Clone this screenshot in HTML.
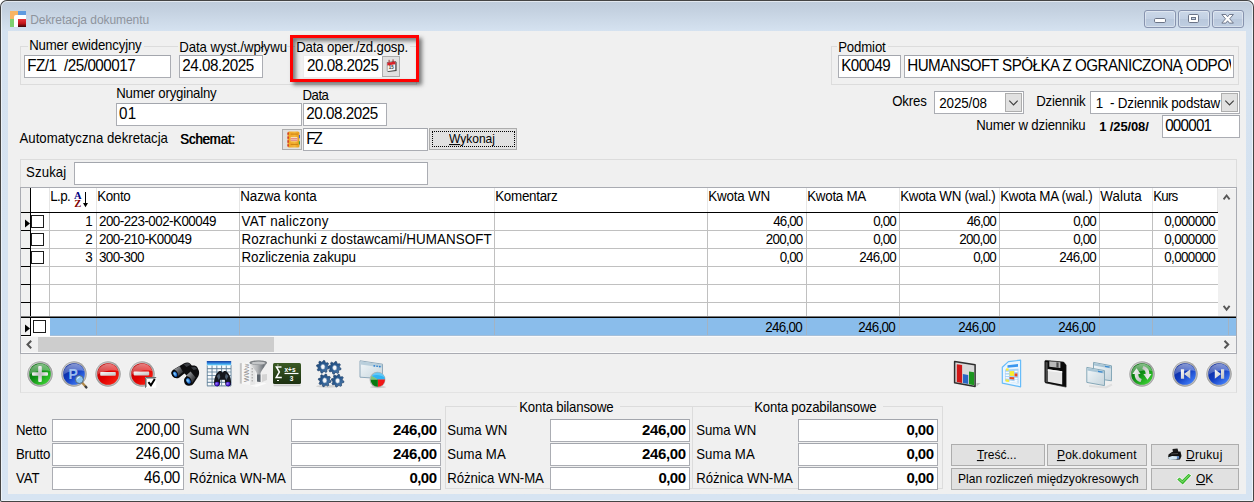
<!DOCTYPE html>
<html lang="pl"><head><meta charset="utf-8"><title>Dekretacja dokumentu</title>
<style>
*{box-sizing:border-box;margin:0;padding:0}
html,body{width:1254px;height:502px;overflow:hidden;background:#fff}
body{font-family:"Liberation Sans",Arial,sans-serif;font-size:13px;color:#000}
#win{position:absolute;left:0;top:0;width:1254px;height:502px;overflow:hidden;
 box-shadow:inset 0 0 0 1px #444;border-radius:7px 7px 2px 2px;
 background:linear-gradient(#becbda 0px,#c4d1e0 10px,#d5e2f0 31px,#d7e4f2 100%)}
#win>*{position:absolute}
.t{white-space:pre;line-height:normal}
.client{background:#f0f0f0}
.in{background:#fff;border:1px solid #abadb3;border-top-color:#a3a6ad}
.gb{border:1px solid #dcdcdc}
.lbl{background:#f0f0f0;padding:0 2px 0 1.5px;margin-left:-1.5px}
.btn{border:1px solid #adadad;background:#e1e1e1}
.ln{background:#c0c0c0}
.bk{background:#000}
u{text-decoration:underline;text-underline-offset:1px}

</style></head>
<body>
<div id="win">
<div style="left:1px;top:1px;width:1252px;height:500px;border:1px solid rgba(255,255,255,.55);border-radius:6px 6px 1px 1px"></div>
<svg style="left:10px;top:11px" width="16" height="16" viewBox="0 0 16 16">
<rect x="0" y="0" width="8" height="8" fill="#f9b463"/><rect x="8" y="0" width="8" height="4" fill="#5f9be0"/>
<rect x="0" y="8" width="4" height="8" fill="#7ed070"/>
<path d="M4 16V6a2 2 0 0 1 2-2h10v12z" fill="#fff"/>
<defs><linearGradient id="rg" x1="0" y1="0" x2="0" y2="1"><stop offset="0" stop-color="#e8343a"/><stop offset=".55" stop-color="#c4161c"/><stop offset="1" stop-color="#3a0508"/></linearGradient></defs>
<rect x="8" y="8" width="8" height="8" fill="url(#rg)"/></svg>
<span class="t " style="top:13px;font-size:12.01px;left:30.2px;letter-spacing:-0.056px;color:#8e949d;">Dekretacja dokumentu</span>
<div class="" style="left:1144px;top:10px;width:32px;height:18px;border:1px solid #8793ae;border-radius:3px;background:linear-gradient(#cbd8e8,#c2d0e3 48%,#b9c8dc 52%,#bfcee1);box-shadow:inset 0 0 0 1px rgba(255,255,255,.4)"></div>
<div class="" style="left:1178px;top:10px;width:32px;height:18px;border:1px solid #8793ae;border-radius:3px;background:linear-gradient(#cbd8e8,#c2d0e3 48%,#b9c8dc 52%,#bfcee1);box-shadow:inset 0 0 0 1px rgba(255,255,255,.4)"></div>
<div class="" style="left:1212px;top:10px;width:32px;height:18px;border:1px solid #8793ae;border-radius:3px;background:linear-gradient(#cbd8e8,#c2d0e3 48%,#b9c8dc 52%,#bfcee1);box-shadow:inset 0 0 0 1px rgba(255,255,255,.4)"></div>
<svg style="left:1144px;top:10px" width="100" height="18" viewBox="0 0 100 18"><rect x="10.5" y="8.5" width="11" height="4" rx="1.2" fill="#fff" stroke="#6b7487"/><rect x="44.5" y="4.5" width="10" height="8" rx="1.2" fill="#fff" stroke="#6b7487"/><rect x="47.5" y="7.5" width="4" height="2" fill="#c6d2e3" stroke="#6b7487"/><path d="M77.800 4.500h4.100l1.700 2.300 1.700-2.300h4.100l-3.700 4.300 3.700 4.300h-4.100l-1.700-2.300-1.700 2.300h-4.100l3.700-4.300z" fill="#fff" stroke="#656e82" stroke-width=".9" stroke-linejoin="round"/></svg>
<div class="client" style="left:8px;top:31px;width:1238px;height:463px;"></div>
<div class="gb" style="left:20px;top:46px;width:397px;height:39px;"></div>
<span class="t lbl" style="top:38px;font-size:13.2px;left:29.2px;letter-spacing:-0.161px;transform:scaleY(1.07);transform-origin:0 12px;">Numer ewidencyjny</span>
<div class="in" style="left:24px;top:55px;width:147px;height:23px;"></div>
<span class="t " style="top:57px;font-size:15.2px;left:27.2px;letter-spacing:-0.478px;transform:scaleY(1.035);transform-origin:0 14px;">FZ/1  /25/000017</span>
<div class="" style="left:178px;top:40px;width:109px;height:14px;background:#f0f0f0"></div>
<span class="t " style="top:40px;font-size:13.2px;left:179.2px;letter-spacing:-0.042px;transform:scaleY(1.07);transform-origin:0 12px;">Data wyst./wpływu</span>
<div class="in" style="left:179px;top:55px;width:84px;height:23px;"></div>
<span class="t " style="top:57px;font-size:15.2px;left:182.2px;letter-spacing:-0.442px;transform:scaleY(1.035);transform-origin:0 14px;">24.08.2025</span>
<span class="t lbl" style="top:40px;font-size:13.2px;left:296.2px;letter-spacing:-0.132px;transform:scaleY(1.07);transform-origin:0 12px;">Data oper./zd.gosp.</span>
<div class="" style="left:303px;top:55px;width:80px;height:23px;background:#fff;border:1px solid #ececec"></div>
<span class="t " style="top:57px;font-size:15.2px;left:307.1px;letter-spacing:-0.464px;transform:scaleY(1.035);transform-origin:0 14px;">20.08.2025</span>
<div class="btn" style="left:382px;top:56px;width:18px;height:21px;"></div>
<svg style="left:385.500px;top:59.300px" width="11.500" height="13.500" viewBox="0 0 13 15"><path d="M1 3.500l9.500-1.500 1.500 1.500v10l-9.500 1.200-1.500-1.400z" fill="#4a4a4a"/><path d="M1.500 4.200l9-1.400v9.500l-9 1.300z" fill="#f4f4f4"/><path d="M1.500 4.200l9-1.400v3l-9 1.400z" fill="#d8222a"/><path d="M3.500 .800v3M8 .300v3" stroke="#8a1a1a" stroke-width="1"/><text x="3.200" y="11.500" font-family="Liberation Sans,sans-serif" font-size="5" font-weight="bold" fill="#333">15</text></svg>
<div class="" style="left:290px;top:35px;width:129px;height:47px;border:3px solid #f00;box-shadow:3px 3px 4px rgba(0,0,0,.5),inset 3px 3px 4px rgba(0,0,0,.5)"></div>
<div class="gb" style="left:831px;top:46px;width:408px;height:39px;"></div>
<span class="t lbl" style="top:40px;font-size:13.2px;left:838.2px;letter-spacing:-0.136px;transform:scaleY(1.07);transform-origin:0 12px;">Podmiot</span>
<div class="in" style="left:838px;top:55px;width:63px;height:23px;"></div>
<span class="t " style="top:57px;font-size:15.2px;left:841.2px;letter-spacing:-0.562px;transform:scaleY(1.035);transform-origin:0 14px;">K00049</span>
<div class="in" style="left:904px;top:55px;width:330px;height:23px;overflow:hidden"></div>
<div style="left:907.2px;top:57px;width:323.79999999999995px;height:21px;overflow:hidden"><span class="t " style="position:absolute;top:0;font-size:15.2px;left:0;letter-spacing:-0.529px;transform:scaleY(1.035);transform-origin:0 14px;">HUMANSOFT SPÓŁKA Z OGRANICZONĄ ODPOW</span></div>
<span class="t " style="top:86px;font-size:13.2px;left:116.2px;letter-spacing:-0.189px;transform:scaleY(1.07);transform-origin:0 12px;">Numer oryginalny</span>
<div class="in" style="left:116px;top:103px;width:186px;height:23px;"></div>
<span class="t " style="top:105px;font-size:15.2px;left:119.0px;letter-spacing:0.378px;transform:scaleY(1.035);transform-origin:0 14px;">01</span>
<span class="t " style="top:88px;font-size:13.2px;left:302.4px;letter-spacing:-0.431px;transform:scaleY(1.07);transform-origin:0 12px;">Data</span>
<div class="in" style="left:303px;top:103px;width:84px;height:23px;"></div>
<span class="t " style="top:105px;font-size:15.2px;left:306.2px;letter-spacing:-0.442px;transform:scaleY(1.035);transform-origin:0 14px;">20.08.2025</span>
<span class="t " style="top:94px;font-size:13.2px;left:892.2px;letter-spacing:-0.151px;transform:scaleY(1.07);transform-origin:0 12px;">Okres</span>
<div class="in" style="left:934px;top:91px;width:90px;height:23px;"></div>
<span class="t " style="top:96px;font-size:13.4px;left:939.2px;letter-spacing:-0.09px;transform:scaleY(1.05);transform-origin:0 12px;">2025/08</span>
<div class="btn" style="left:1005px;top:93px;width:17px;height:19px;"></div>
<svg style="left:1005px;top:93px" width="17" height="19" viewBox="0 0 17 19"><path d="M4.3 7.600l4.200 4.200 4.200-4.200" fill="none" stroke="#404040" stroke-width="1.200"/></svg>
<span class="t " style="top:94px;font-size:13.2px;left:1036.2px;letter-spacing:-0.15px;transform:scaleY(1.07);transform-origin:0 12px;">Dziennik</span>
<div class="in" style="left:1090px;top:91px;width:150px;height:23px;"></div>
<span class="t " style="top:96px;font-size:13.4px;left:1095.7px;letter-spacing:-0.177px;transform:scaleY(1.05);transform-origin:0 12px;">1  - Dziennik podstaw</span>
<div class="btn" style="left:1221px;top:93px;width:17px;height:19px;"></div>
<svg style="left:1221px;top:93px" width="17" height="19" viewBox="0 0 17 19"><path d="M4.3 7.600l4.200 4.200 4.200-4.200" fill="none" stroke="#404040" stroke-width="1.200"/></svg>
<span class="t " style="top:118px;font-size:13.2px;left:976.2px;letter-spacing:-0.165px;transform:scaleY(1.07);transform-origin:0 12px;">Numer w dzienniku</span>
<span class="t " style="top:119px;font-size:13px;left:1099.2px;letter-spacing:-0.124px;font-weight:bold;transform:scaleY(1.05);transform-origin:0 12px;">1 /25/08/</span>
<div class="in" style="left:1162px;top:115px;width:78px;height:23px;"></div>
<span class="t " style="top:117px;font-size:15.2px;left:1165.2px;letter-spacing:-0.764px;transform:scaleY(1.035);transform-origin:0 14px;">000001</span>
<span class="t " style="top:131px;font-size:13.2px;left:19.5px;letter-spacing:0.017px;transform:scaleY(1.07);transform-origin:0 12px;">Automatyczna dekretacja</span>
<span class="t " style="top:132px;font-size:13.2px;left:180.0px;letter-spacing:-0.122px;text-shadow:.55px 0 0 #000;transform:scaleY(1.07);transform-origin:0 12px;">Schemat:</span>
<div class="btn" style="left:282px;top:129px;width:20px;height:21px;"></div>
<svg style="left:285.700px;top:131px" width="14.500" height="17.500" viewBox="0 0 14 17"><defs><linearGradient id="nb" x1="0" y1="0" x2="1" y2="0"><stop offset="0" stop-color="#f0a020"/><stop offset=".6" stop-color="#f4b83c"/><stop offset="1" stop-color="#e89a18"/></linearGradient></defs><rect x="1.500" y=".500" width="11.500" height="15.500" rx="1.500" fill="url(#nb)"/><path d="M2 1.500v13.500" stroke="#c8202c" stroke-width="1.200" stroke-dasharray="2.200 1.600"/><rect x="4.500" y="6" width="6.500" height="4" fill="#f6e8d8"/><path d="M4.500 7.500h6.500M4.500 9h6.500" stroke="#d85a5a" stroke-width=".8"/><path d="M4.500 3h7M4.500 13h7" stroke="#c87a10" stroke-width=".9"/><path d="M13 4v3" stroke="#4060d0" stroke-width="1"/><path d="M13 10v3" stroke="#30a040" stroke-width="1"/></svg>
<div class="in" style="left:303px;top:128px;width:125px;height:23px;"></div>
<span class="t " style="top:130px;font-size:15.2px;left:306.3px;letter-spacing:-2.174px;transform:scaleY(1.035);transform-origin:0 14px;">FZ</span>
<div class="btn" style="left:429px;top:128px;width:88px;height:22px;"></div>
<div class="" style="left:432px;top:131px;width:83px;height:16px;border:1px dotted #000"></div>
<span class="t " style="top:132px;font-size:12px;left:449.0px;letter-spacing:-0.002px;transform:scaleY(1.05);transform-origin:0 11px;"><u>W</u>ykonaj</span>
<div class="" style="left:20px;top:159px;width:1217px;height:234px;border:1px solid #dcdcdc;border-bottom-color:#e3e3e3"></div>
<span class="t " style="top:165px;font-size:13.2px;left:26.0px;letter-spacing:0.137px;transform:scaleY(1.07);transform-origin:0 12px;">Szukaj</span>
<div class="in" style="left:74px;top:162px;width:354px;height:23px;"></div>
<div class="" style="left:20px;top:187px;width:1217px;height:166px;background:#fff;border:1px solid #a9abb2;border-right:0;border-bottom:0"></div>
<div class="" style="left:21px;top:188px;width:9px;height:148px;background:#f0f0f0"></div>
<div class="bk" style="left:30px;top:188px;width:1px;height:148px;"></div>
<div class="" style="left:49px;top:188px;width:1px;height:24px;background:#e6e6e6"></div>
<div class="ln" style="left:49px;top:213px;width:1px;height:104px;"></div>
<div class="" style="left:96px;top:188px;width:1px;height:24px;background:#e6e6e6"></div>
<div class="ln" style="left:96px;top:213px;width:1px;height:104px;"></div>
<div class="" style="left:96px;top:318px;width:1px;height:18px;background:#a9b4bf"></div>
<div class="" style="left:239px;top:188px;width:1px;height:24px;background:#e6e6e6"></div>
<div class="ln" style="left:239px;top:213px;width:1px;height:104px;"></div>
<div class="" style="left:239px;top:318px;width:1px;height:18px;background:#a9b4bf"></div>
<div class="" style="left:494px;top:188px;width:1px;height:24px;background:#e6e6e6"></div>
<div class="ln" style="left:494px;top:213px;width:1px;height:104px;"></div>
<div class="" style="left:494px;top:318px;width:1px;height:18px;background:#a9b4bf"></div>
<div class="" style="left:707px;top:188px;width:1px;height:24px;background:#e6e6e6"></div>
<div class="ln" style="left:707px;top:213px;width:1px;height:104px;"></div>
<div class="" style="left:707px;top:318px;width:1px;height:18px;background:#a9b4bf"></div>
<div class="" style="left:806px;top:188px;width:1px;height:24px;background:#e6e6e6"></div>
<div class="ln" style="left:806px;top:213px;width:1px;height:104px;"></div>
<div class="" style="left:806px;top:318px;width:1px;height:18px;background:#a9b4bf"></div>
<div class="" style="left:899px;top:188px;width:1px;height:24px;background:#e6e6e6"></div>
<div class="ln" style="left:899px;top:213px;width:1px;height:104px;"></div>
<div class="" style="left:899px;top:318px;width:1px;height:18px;background:#a9b4bf"></div>
<div class="" style="left:999px;top:188px;width:1px;height:24px;background:#e6e6e6"></div>
<div class="ln" style="left:999px;top:213px;width:1px;height:104px;"></div>
<div class="" style="left:999px;top:318px;width:1px;height:18px;background:#a9b4bf"></div>
<div class="" style="left:1099px;top:188px;width:1px;height:24px;background:#e6e6e6"></div>
<div class="ln" style="left:1099px;top:213px;width:1px;height:104px;"></div>
<div class="" style="left:1099px;top:318px;width:1px;height:18px;background:#a9b4bf"></div>
<div class="" style="left:1152px;top:188px;width:1px;height:24px;background:#e6e6e6"></div>
<div class="ln" style="left:1152px;top:213px;width:1px;height:104px;"></div>
<div class="" style="left:1152px;top:318px;width:1px;height:18px;background:#a9b4bf"></div>
<div class="bk" style="left:21px;top:212px;width:1197px;height:1px;"></div>
<div class="ln" style="left:31px;top:230px;width:1187px;height:1px;"></div>
<div class="bk" style="left:21px;top:230px;width:10px;height:1px;"></div>
<div class="ln" style="left:31px;top:248px;width:1187px;height:1px;"></div>
<div class="bk" style="left:21px;top:248px;width:10px;height:1px;"></div>
<div class="ln" style="left:31px;top:266px;width:1187px;height:1px;"></div>
<div class="bk" style="left:21px;top:266px;width:10px;height:1px;"></div>
<div class="ln" style="left:31px;top:284px;width:1187px;height:1px;"></div>
<div class="bk" style="left:21px;top:284px;width:10px;height:1px;"></div>
<div class="ln" style="left:31px;top:302px;width:1187px;height:1px;"></div>
<div class="bk" style="left:21px;top:302px;width:10px;height:1px;"></div>
<div class="" style="left:1217px;top:188px;width:1px;height:24px;background:#e6e6e6"></div>
<div class="" style="left:1218px;top:188px;width:18px;height:129px;background:#f0f0f0;border-top:1px solid #fbfbfb"></div>
<svg style="left:1218px;top:188px" width="18" height="129" viewBox="0 0 18 129"><path d="M5.600 11.300L8.600 7.500L11.600 11.300M5.600 117.900L8.600 121.700L11.600 117.900" fill="none" stroke="#585858" stroke-width="1.900"/></svg>
<div class="" style="left:21px;top:316px;width:1215px;height:1px;background:#7a7a7a"></div>
<div class="bk" style="left:21px;top:317px;width:1215px;height:1px;"></div>
<div class="" style="left:31px;top:318px;width:19px;height:18px;background:#fff"></div>
<div class="" style="left:50px;top:318px;width:1186px;height:18px;background:#8abdeb"></div>
<div class="" style="left:96px;top:318px;width:1px;height:18px;background:#a3b3c3"></div>
<div class="" style="left:239px;top:318px;width:1px;height:18px;background:#a3b3c3"></div>
<div class="" style="left:494px;top:318px;width:1px;height:18px;background:#a3b3c3"></div>
<div class="" style="left:707px;top:318px;width:1px;height:18px;background:#a3b3c3"></div>
<div class="" style="left:806px;top:318px;width:1px;height:18px;background:#a3b3c3"></div>
<div class="" style="left:899px;top:318px;width:1px;height:18px;background:#a3b3c3"></div>
<div class="" style="left:999px;top:318px;width:1px;height:18px;background:#a3b3c3"></div>
<div class="" style="left:1099px;top:318px;width:1px;height:18px;background:#a3b3c3"></div>
<div class="" style="left:1152px;top:318px;width:1px;height:18px;background:#a3b3c3"></div>
<div class="" style="left:1228px;top:318px;width:1px;height:18px;background:#a3b3c3"></div>
<div class="bk" style="left:21px;top:335px;width:10px;height:1px;"></div>
<div class="" style="left:50px;top:335px;width:1186px;height:1px;background:#a4bfda"></div>
<div class="" style="left:21px;top:336px;width:1215px;height:17px;background:#f0f0f0;border-top:1px solid #fafafa;border-bottom:1px solid #fafafa"></div>
<div class="" style="left:38px;top:337px;width:236px;height:15px;background:#cdcdcd"></div>
<svg style="left:21px;top:336px" width="1215" height="17" viewBox="0 0 1215 17"><path d="M10.200 4.800l-3.700 3.700 3.700 3.700M1203.500 4.800l3.700 3.700-3.700 3.700" fill="none" stroke="#555" stroke-width="2"/></svg>
<div class="" style="left:20px;top:353px;width:1217px;height:1px;background:#a9abb2"></div>
<div class="" style="left:1236px;top:187px;width:1px;height:167px;background:#a9abb2"></div>
<div class="" style="left:31px;top:215px;width:13px;height:13px;background:#fff;border:1px solid #1c1c1c"></div>
<div class="" style="left:31px;top:233px;width:13px;height:13px;background:#fff;border:1px solid #1c1c1c"></div>
<div class="" style="left:31px;top:251px;width:13px;height:13px;background:#fff;border:1px solid #1c1c1c"></div>
<div class="" style="left:33px;top:320px;width:13px;height:13px;background:#fff;border:1px solid #1c1c1c"></div>
<svg style="left:24px;top:219px" width="6" height="9" viewBox="0 0 6 9"><path d="M1 0.5l5 4-5 4z" fill="#000"/></svg>
<svg style="left:24px;top:324px" width="6" height="9" viewBox="0 0 6 9"><path d="M1 0.5l5 4-5 4z" fill="#000"/></svg>
<span class="t " style="top:189px;font-size:13.4px;left:50.2px;letter-spacing:-0.584px;transform:scaleY(1.05);transform-origin:0 12px;">L.p.</span>
<span class="t " style="top:189px;font-size:13.4px;left:97.2px;letter-spacing:-0.354px;transform:scaleY(1.05);transform-origin:0 12px;">Konto</span>
<span class="t " style="top:189px;font-size:13.4px;left:240.2px;letter-spacing:-0.088px;transform:scaleY(1.05);transform-origin:0 12px;">Nazwa konta</span>
<span class="t " style="top:189px;font-size:13.4px;left:495.2px;letter-spacing:-0.274px;transform:scaleY(1.05);transform-origin:0 12px;">Komentarz</span>
<span class="t " style="top:189px;font-size:13.4px;left:708.2px;letter-spacing:-0.17px;transform:scaleY(1.05);transform-origin:0 12px;">Kwota WN</span>
<span class="t " style="top:189px;font-size:13.4px;left:807.2px;letter-spacing:-0.281px;transform:scaleY(1.05);transform-origin:0 12px;">Kwota MA</span>
<span class="t " style="top:189px;font-size:13.4px;left:900.2px;letter-spacing:-0.297px;transform:scaleY(1.05);transform-origin:0 12px;">Kwota WN (wal.)</span>
<span class="t " style="top:189px;font-size:13.4px;left:1000.2px;letter-spacing:-0.3px;transform:scaleY(1.05);transform-origin:0 12px;">Kwota MA (wal.)</span>
<span class="t " style="top:189px;font-size:13.4px;left:1100.2px;letter-spacing:0.076px;transform:scaleY(1.05);transform-origin:0 12px;">Waluta</span>
<span class="t " style="top:189px;font-size:13.4px;left:1153.2px;letter-spacing:-0.817px;transform:scaleY(1.05);transform-origin:0 12px;">Kurs</span>
<svg style="left:73px;top:190px" width="20" height="20" viewBox="0 0 20 20"><text x="1" y="9" font-family="Liberation Serif,serif" font-size="10.500" font-weight="bold" fill="#000080">A</text><text x="1.2" y="17.200" font-family="Liberation Serif,serif" font-size="10.500" font-weight="bold" fill="#800000">Z</text><path d="M12 2h1v12h-1z M10 13h5l-2.5 4.200z" fill="#000"/></svg>
<span class="t " style="top:214px;font-size:13.4px;right:1161.20px;transform:scaleY(1.05);transform-origin:0 12px;">1</span>
<span class="t " style="top:214px;font-size:13.4px;left:99.0px;letter-spacing:-0.533px;transform:scaleY(1.05);transform-origin:0 12px;">200-223-002-K00049</span>
<span class="t " style="top:214px;font-size:13.4px;left:241.5px;letter-spacing:0.29px;transform:scaleY(1.05);transform-origin:0 12px;">VAT naliczony</span>
<span class="t " style="top:214px;font-size:13.4px;right:451.55px;letter-spacing:-0.857px;transform:scaleY(1.05);transform-origin:0 12px;">46,00</span>
<span class="t " style="top:214px;font-size:13.4px;right:358.02px;letter-spacing:-0.825px;transform:scaleY(1.05);transform-origin:0 12px;">0,00</span>
<span class="t " style="top:214px;font-size:13.4px;right:258.05px;letter-spacing:-0.857px;transform:scaleY(1.05);transform-origin:0 12px;">46,00</span>
<span class="t " style="top:214px;font-size:13.4px;right:158.02px;letter-spacing:-0.825px;transform:scaleY(1.05);transform-origin:0 12px;">0,00</span>
<span class="t " style="top:214px;font-size:13.4px;right:38.81px;letter-spacing:-0.613px;transform:scaleY(1.05);transform-origin:0 12px;">0,000000</span>
<span class="t " style="top:232px;font-size:13.4px;right:1161.20px;transform:scaleY(1.05);transform-origin:0 12px;">2</span>
<span class="t " style="top:232px;font-size:13.4px;left:99.0px;letter-spacing:-0.534px;transform:scaleY(1.05);transform-origin:0 12px;">200-210-K00049</span>
<span class="t " style="top:232px;font-size:13.4px;left:241.5px;letter-spacing:0.074px;transform:scaleY(1.05);transform-origin:0 12px;">Rozrachunki z dostawcami/HUMANSOFT</span>
<span class="t " style="top:232px;font-size:13.4px;right:451.38px;letter-spacing:-0.678px;transform:scaleY(1.05);transform-origin:0 12px;">200,00</span>
<span class="t " style="top:232px;font-size:13.4px;right:358.02px;letter-spacing:-0.825px;transform:scaleY(1.05);transform-origin:0 12px;">0,00</span>
<span class="t " style="top:232px;font-size:13.4px;right:257.88px;letter-spacing:-0.678px;transform:scaleY(1.05);transform-origin:0 12px;">200,00</span>
<span class="t " style="top:232px;font-size:13.4px;right:158.02px;letter-spacing:-0.825px;transform:scaleY(1.05);transform-origin:0 12px;">0,00</span>
<span class="t " style="top:232px;font-size:13.4px;right:38.81px;letter-spacing:-0.613px;transform:scaleY(1.05);transform-origin:0 12px;">0,000000</span>
<span class="t " style="top:250px;font-size:13.4px;right:1161.20px;transform:scaleY(1.05);transform-origin:0 12px;">3</span>
<span class="t " style="top:250px;font-size:13.4px;left:99.0px;letter-spacing:-0.596px;transform:scaleY(1.05);transform-origin:0 12px;">300-300</span>
<span class="t " style="top:250px;font-size:13.4px;left:241.5px;letter-spacing:-0.05px;transform:scaleY(1.05);transform-origin:0 12px;">Rozliczenia zakupu</span>
<span class="t " style="top:250px;font-size:13.4px;right:451.52px;letter-spacing:-0.825px;transform:scaleY(1.05);transform-origin:0 12px;">0,00</span>
<span class="t " style="top:250px;font-size:13.4px;right:357.88px;letter-spacing:-0.678px;transform:scaleY(1.05);transform-origin:0 12px;">246,00</span>
<span class="t " style="top:250px;font-size:13.4px;right:258.02px;letter-spacing:-0.825px;transform:scaleY(1.05);transform-origin:0 12px;">0,00</span>
<span class="t " style="top:250px;font-size:13.4px;right:157.88px;letter-spacing:-0.678px;transform:scaleY(1.05);transform-origin:0 12px;">246,00</span>
<span class="t " style="top:250px;font-size:13.4px;right:38.81px;letter-spacing:-0.613px;transform:scaleY(1.05);transform-origin:0 12px;">0,000000</span>
<span class="t " style="top:320px;font-size:13.4px;right:451.88px;letter-spacing:-0.678px;transform:scaleY(1.05);transform-origin:0 12px;">246,00</span>
<span class="t " style="top:320px;font-size:13.4px;right:358.88px;letter-spacing:-0.678px;transform:scaleY(1.05);transform-origin:0 12px;">246,00</span>
<span class="t " style="top:320px;font-size:13.4px;right:258.88px;letter-spacing:-0.678px;transform:scaleY(1.05);transform-origin:0 12px;">246,00</span>
<span class="t " style="top:320px;font-size:13.4px;right:158.88px;letter-spacing:-0.678px;transform:scaleY(1.05);transform-origin:0 12px;">246,00</span>
<span class="t " style="top:423px;font-size:13.2px;left:15.9px;letter-spacing:-0.162px;transform:scaleY(1.07);transform-origin:0 12px;">Netto</span>
<div class="in" style="left:52px;top:419px;width:132px;height:23px;"></div>
<span class="t " style="top:421px;font-size:15.2px;right:1074.28px;letter-spacing:-0.379px;transform:scaleY(1.035);transform-origin:0 14px;">200,00</span>
<span class="t " style="top:447px;font-size:13.2px;left:15.9px;letter-spacing:-0.124px;transform:scaleY(1.07);transform-origin:0 12px;">Brutto</span>
<div class="in" style="left:52px;top:443px;width:132px;height:23px;"></div>
<span class="t " style="top:445px;font-size:15.2px;right:1074.28px;letter-spacing:-0.379px;transform:scaleY(1.035);transform-origin:0 14px;">246,00</span>
<span class="t " style="top:471px;font-size:13.2px;left:15.9px;letter-spacing:-0.054px;transform:scaleY(1.07);transform-origin:0 12px;">VAT</span>
<div class="in" style="left:52px;top:467px;width:132px;height:23px;"></div>
<span class="t " style="top:469px;font-size:15.2px;right:1074.38px;letter-spacing:-0.483px;transform:scaleY(1.035);transform-origin:0 14px;">46,00</span>
<div class="gb" style="left:445px;top:406px;width:248px;height:83px;"></div>
<div class="gb" style="left:692px;top:406px;width:251px;height:83px;"></div>
<div class="" style="left:517px;top:400px;width:103px;height:14px;background:#f0f0f0"></div>
<span class="t " style="top:400px;font-size:13.2px;left:519.2px;letter-spacing:-0.162px;transform:scaleY(1.07);transform-origin:0 12px;">Konta bilansowe</span>
<div class="" style="left:752px;top:400px;width:131px;height:14px;background:#f0f0f0"></div>
<span class="t " style="top:400px;font-size:13.2px;left:754.2px;letter-spacing:-0.161px;transform:scaleY(1.07);transform-origin:0 12px;">Konta pozabilansowe</span>
<span class="t " style="top:423px;font-size:13.2px;left:189.2px;letter-spacing:-0.007px;transform:scaleY(1.07);transform-origin:0 12px;">Suma WN</span>
<div class="in" style="left:291px;top:419px;width:150px;height:23px;"></div>
<span class="t " style="top:421px;font-size:15px;right:817.38px;letter-spacing:-0.377px;font-weight:bold;transform:scaleY(1.02);transform-origin:0 14px;">246,00</span>
<span class="t " style="top:447px;font-size:13.2px;left:189.2px;letter-spacing:0.109px;transform:scaleY(1.07);transform-origin:0 12px;">Suma MA</span>
<div class="in" style="left:291px;top:443px;width:150px;height:23px;"></div>
<span class="t " style="top:445px;font-size:15px;right:817.38px;letter-spacing:-0.377px;font-weight:bold;transform:scaleY(1.02);transform-origin:0 14px;">246,00</span>
<span class="t " style="top:471px;font-size:13.2px;left:189.2px;letter-spacing:-0.062px;transform:scaleY(1.07);transform-origin:0 12px;">Różnica WN-MA</span>
<div class="in" style="left:291px;top:467px;width:150px;height:23px;"></div>
<span class="t " style="top:469px;font-size:15px;right:817.53px;letter-spacing:-0.53px;font-weight:bold;transform:scaleY(1.02);transform-origin:0 14px;">0,00</span>
<span class="t " style="top:423px;font-size:13.2px;left:447.2px;letter-spacing:-0.007px;transform:scaleY(1.07);transform-origin:0 12px;">Suma WN</span>
<div class="in" style="left:550px;top:419px;width:140px;height:23px;"></div>
<span class="t " style="top:421px;font-size:15px;right:568.38px;letter-spacing:-0.377px;font-weight:bold;transform:scaleY(1.02);transform-origin:0 14px;">246,00</span>
<span class="t " style="top:447px;font-size:13.2px;left:447.2px;letter-spacing:0.109px;transform:scaleY(1.07);transform-origin:0 12px;">Suma MA</span>
<div class="in" style="left:550px;top:443px;width:140px;height:23px;"></div>
<span class="t " style="top:445px;font-size:15px;right:568.38px;letter-spacing:-0.377px;font-weight:bold;transform:scaleY(1.02);transform-origin:0 14px;">246,00</span>
<span class="t " style="top:471px;font-size:13.2px;left:447.2px;letter-spacing:-0.062px;transform:scaleY(1.07);transform-origin:0 12px;">Różnica WN-MA</span>
<div class="in" style="left:550px;top:467px;width:140px;height:23px;"></div>
<span class="t " style="top:469px;font-size:15px;right:568.53px;letter-spacing:-0.53px;font-weight:bold;transform:scaleY(1.02);transform-origin:0 14px;">0,00</span>
<span class="t " style="top:423px;font-size:13.2px;left:696.2px;letter-spacing:-0.007px;transform:scaleY(1.07);transform-origin:0 12px;">Suma WN</span>
<div class="in" style="left:798px;top:419px;width:140px;height:23px;"></div>
<span class="t " style="top:421px;font-size:15px;right:320.53px;letter-spacing:-0.53px;font-weight:bold;transform:scaleY(1.02);transform-origin:0 14px;">0,00</span>
<span class="t " style="top:447px;font-size:13.2px;left:696.2px;letter-spacing:0.109px;transform:scaleY(1.07);transform-origin:0 12px;">Suma MA</span>
<div class="in" style="left:798px;top:443px;width:140px;height:23px;"></div>
<span class="t " style="top:445px;font-size:15px;right:320.53px;letter-spacing:-0.53px;font-weight:bold;transform:scaleY(1.02);transform-origin:0 14px;">0,00</span>
<span class="t " style="top:471px;font-size:13.2px;left:696.2px;letter-spacing:-0.062px;transform:scaleY(1.07);transform-origin:0 12px;">Różnica WN-MA</span>
<div class="in" style="left:798px;top:467px;width:140px;height:23px;"></div>
<span class="t " style="top:469px;font-size:15px;right:320.53px;letter-spacing:-0.53px;font-weight:bold;transform:scaleY(1.02);transform-origin:0 14px;">0,00</span>
<div class="btn" style="left:951px;top:444px;width:94px;height:22px;"></div>
<span class="t " style="top:448px;font-size:12px;left:976.9px;letter-spacing:0.007px;transform:scaleY(1.05);transform-origin:0 11px;"><u>T</u>reść...</span>
<div class="btn" style="left:1047px;top:444px;width:100px;height:22px;"></div>
<span class="t " style="top:448px;font-size:12px;left:1056.9px;letter-spacing:0.262px;transform:scaleY(1.05);transform-origin:0 11px;"><u>P</u>ok.dokument</span>
<div class="btn" style="left:1151px;top:444px;width:88px;height:22px;"></div>
<span class="t " style="top:448px;font-size:12px;left:1185.9px;letter-spacing:0.344px;transform:scaleY(1.05);transform-origin:0 11px;"><u>D</u>rukuj</span>
<div class="btn" style="left:951px;top:468px;width:196px;height:22px;"></div>
<span class="t " style="top:472px;font-size:12px;left:958.0px;letter-spacing:0.04px;transform:scaleY(1.05);transform-origin:0 11px;">Plan rozliczeń międzyokresowych</span>
<div class="btn" style="left:1151px;top:468px;width:88px;height:22px;"></div>
<span class="t " style="top:472px;font-size:12px;left:1196.0px;letter-spacing:-0.04px;transform:scaleY(1.05);transform-origin:0 11px;"><u>O</u>K</span>
<svg style="left:1167px;top:448px" width="15" height="13" viewBox="0 0 15 13"><path d="M5.500 1l5-.6 1 3.600-5.500 1z" fill="#1a1a1a"/><path d="M1.500 6.500l3.500-2.500 8.500-.5 1 4.500-1.500 3.500-9 .500-3-2z" fill="#111"/><path d="M.8 9.500l4.200-1.500 6 .2-1.500 3.300-6.500 .5z" fill="#d4e8f4"/><path d="M9.800 8.200l2.200-.2.300 2.500-2.200 .5z" fill="#5a86c0"/><path d="M4 6l7-.5" stroke="#555" stroke-width=".8"/></svg>
<svg style="left:1176px;top:473px" width="16" height="12" viewBox="0 0 16 12"><path d="M1.200 6.400l2.300-2 2.700 2.700 6.300-6.300 2.600 1.700-8.400 8.900z" fill="#fff" fill-opacity=".9" stroke="#fff" stroke-width="1.200" stroke-linejoin="round"/><path d="M1.200 6.400l2.300-2 2.700 2.700 6.300-6.300 2.600 1.700-8.400 8.900z" fill="#39b52c"/><path d="M2.500 6.300l1.100-.9 2.700 2.800 6.400-6.400 1 .6-7.300 7.400z" fill="#7fe070" fill-opacity=".8"/></svg>
<svg width="0" height="0" style="left:0;top:0"><defs>
<linearGradient id="ring" x1="0" y1="0" x2="1" y2="1"><stop offset="0" stop-color="#e4e4e4"/><stop offset=".5" stop-color="#a9a9a9"/><stop offset="1" stop-color="#c9c9c9"/></linearGradient>
<linearGradient id="gG" x1=".1" y1="0" x2=".9" y2="1"><stop offset="0" stop-color="#0a6a0e"/><stop offset=".45" stop-color="#0b8a12"/><stop offset=".8" stop-color="#2fc02a"/><stop offset="1" stop-color="#48d040"/></linearGradient>
<linearGradient id="gR" x1="0" y1="0" x2="1" y2="1"><stop offset="0" stop-color="#b30000"/><stop offset=".5" stop-color="#e00000"/><stop offset="1" stop-color="#ff2a1a"/></linearGradient>
<linearGradient id="gB" x1=".1" y1="0" x2=".9" y2="1"><stop offset="0" stop-color="#0a2490"/><stop offset=".5" stop-color="#123cc0"/><stop offset=".85" stop-color="#3a74f0"/><stop offset="1" stop-color="#5a95ff"/></linearGradient>
<linearGradient id="gl" x1="0" y1="0" x2="0" y2="1"><stop offset="0" stop-color="#fff" stop-opacity=".5"/><stop offset="1" stop-color="#fff" stop-opacity=".18"/></linearGradient>
<radialGradient id="wh2" cx=".5" cy=".5" r=".6"><stop offset="0" stop-color="#b8b8b8"/><stop offset=".6" stop-color="#e4e4e4"/><stop offset="1" stop-color="#f4f4f4"/></radialGradient>
<linearGradient id="wh" x1="0" y1="0" x2="1" y2="1"><stop offset="0" stop-color="#fbfbfb"/><stop offset="1" stop-color="#bdbdbd"/></linearGradient>
<linearGradient id="tb" x1="0" y1="0" x2="0" y2="1"><stop offset="0" stop-color="#16409c"/><stop offset=".4" stop-color="#2a78d8"/><stop offset=".8" stop-color="#58c0f4"/><stop offset="1" stop-color="#b8ecfa"/></linearGradient>
<linearGradient id="gr" x1="0" y1="0" x2="1" y2="1"><stop offset="0" stop-color="#1f4a7c"/><stop offset=".5" stop-color="#2a5a90"/><stop offset="1" stop-color="#5a86b4"/></linearGradient>
<linearGradient id="bg1" x1="0" y1="0" x2="1" y2="1"><stop offset="0" stop-color="#b4b6b8"/><stop offset=".5" stop-color="#5c5e62"/><stop offset="1" stop-color="#141416"/></linearGradient>
<linearGradient id="sv" x1="0" y1="0" x2="1" y2="0"><stop offset="0" stop-color="#e8e8e8"/><stop offset=".45" stop-color="#b4b6b8"/><stop offset=".8" stop-color="#70767c"/><stop offset="1" stop-color="#a0a4a8"/></linearGradient>
<linearGradient id="bd" x1="0" y1="0" x2="0" y2="1"><stop offset="0" stop-color="#3a5a24"/><stop offset="1" stop-color="#1c3010"/></linearGradient>
<linearGradient id="wn" x1="0" y1="0" x2="1" y2="1"><stop offset="0" stop-color="#f4f8fa"/><stop offset="1" stop-color="#c4d4dc"/></linearGradient>
<radialGradient id="ln" cx=".4" cy=".4" r=".7"><stop offset="0" stop-color="#9fe0ff"/><stop offset=".6" stop-color="#1d6fd0"/><stop offset="1" stop-color="#0a2060"/></radialGradient>
<radialGradient id="lp" cx=".4" cy=".4" r=".7"><stop offset="0" stop-color="#a080ff"/><stop offset=".6" stop-color="#3a10c0"/><stop offset="1" stop-color="#100040"/></radialGradient>
</defs></svg>
<svg style="left:26px;top:360px;overflow:visible" width="28" height="28" viewBox="0 0 28 28"><circle cx="14" cy="14" r="13.4" fill="#fff" fill-opacity=".5"/><circle cx="14" cy="14" r="12.8" fill="url(#ring)"/><circle cx="14" cy="14" r="12.3" fill="none" stroke="#8f8f8f" stroke-opacity=".55" stroke-width=".9"/><circle cx="14" cy="14" r="10.800" fill="url(#gG)"/><path d="M3.300 15.200C7 11.200 17 9.600 24.300 11A10.800 10.800 0 0 0 3.300 15.200z" fill="url(#gl)"/><path d="M12.200 7a1 1 0 0 1 1-1h1.600a1 1 0 0 1 1 1v5.200H21a1 1 0 0 1 1 1v1.600a1 1 0 0 1-1 1h-5.200V21a1 1 0 0 1-1 1h-1.600a1 1 0 0 1-1-1v-5.200H7a1 1 0 0 1-1-1v-1.600a1 1 0 0 1 1-1h5.200z" fill="url(#wh2)"/></svg>
<svg style="left:60px;top:360px;overflow:visible" width="28" height="28" viewBox="0 0 28 28"><circle cx="14" cy="14" r="13.4" fill="#fff" fill-opacity=".5"/><circle cx="14" cy="14" r="12.8" fill="url(#ring)"/><circle cx="14" cy="14" r="12.3" fill="none" stroke="#8f8f8f" stroke-opacity=".55" stroke-width=".9"/><circle cx="14" cy="14" r="10.800" fill="url(#gB)"/><path d="M3.300 15.200C7 11.200 17 9.600 24.300 11A10.800 10.800 0 0 0 3.300 15.200z" fill="url(#gl)"/><text x="8.600" y="18.800" font-family="Liberation Sans,sans-serif" font-weight="bold" font-size="14" fill="#a9c9f2" fill-opacity=".92">P</text><path d="M21.600 22l4.600 5.200" stroke="#b08848" stroke-width="2.300" stroke-linecap="round"/><path d="M25.600 26.600l.8.900" stroke="#3a4048" stroke-width="2.300" stroke-linecap="round"/><circle cx="19.400" cy="19.500" r="4" fill="#8cc4f0" stroke="#55616d" stroke-width=".9"/><path d="M16.800 19.800a2.700 2.700 0 0 1 3.800-2.900c-1.400 0-2.800 1.400-3.800 2.900z" fill="#fff" fill-opacity=".85"/></svg>
<svg style="left:94px;top:360px;overflow:visible" width="28" height="28" viewBox="0 0 28 28"><circle cx="14" cy="14" r="13.4" fill="#fff" fill-opacity=".5"/><circle cx="14" cy="14" r="12.8" fill="url(#ring)"/><circle cx="14" cy="14" r="12.3" fill="none" stroke="#8f8f8f" stroke-opacity=".55" stroke-width=".9"/><circle cx="14" cy="14" r="10.800" fill="url(#gR)"/><path d="M3.300 15.200C7 11.200 17 9.600 24.300 11A10.800 10.800 0 0 0 3.300 15.200z" fill="url(#gl)"/><rect x="6.200" y="12" width="15.600" height="3.800" rx=".8" fill="url(#wh)"/></svg>
<svg style="left:128px;top:360px;overflow:visible" width="28" height="28" viewBox="0 0 28 28"><circle cx="14" cy="14" r="13.4" fill="#fff" fill-opacity=".5"/><circle cx="14" cy="14" r="12.8" fill="url(#ring)"/><circle cx="14" cy="14" r="12.3" fill="none" stroke="#8f8f8f" stroke-opacity=".55" stroke-width=".9"/><circle cx="14" cy="14" r="10.800" fill="url(#gR)"/><path d="M3.300 15.200C7 11.200 17 9.600 24.300 11A10.800 10.800 0 0 0 3.300 15.200z" fill="url(#gl)"/><rect x="5.600" y="11.600" width="15.600" height="3.800" rx=".8" fill="url(#wh)"/><rect x="17" y="17" width="11.200" height="10.800" fill="#fff"/><path d="M17.500 27.800v-10.300h10.700" fill="none" stroke="#6a6a6a"/><path d="M18.500 27v-8.500h9" fill="none" stroke="#b0b0b0"/><path d="M20.400 22.200l2.500 3 3.900-6.200" fill="none" stroke="#000" stroke-width="2"/></svg>
<svg style="left:171px;top:360px;overflow:visible" width="28" height="28" viewBox="0 0 28 28"><path d="M.6 13.200C.4 11.400 1.800 10 3.400 9l9.800-5.800c1.800-.9 4.600-1 5.800.200l1.800 2.200 1.600-.200c1.600 0 3.200.6 4 2l1.400 3.200c.6 2 .4 4-.6 5.800l-4.600 7.200c-1 1.600-3 2.400-5 2.200-2.200-.2-4-1.600-4.400-3.800-.2-1.400.2-2.800 1-4l1.600-2.600-2.400-1.800-5 3.800c-1.400 1-3.400 1.200-5 .4C1.800 17 .8 15.200.6 13.200z" fill="#0d0d0f"/><path d="M3.200 9.600l5.600-3.300 3.200 5.600-5.400 4.300z" fill="url(#bg1)"/><path d="M15.400 15.200l4.200-3.600 5 5.800-3.400 5.400z" fill="url(#bg1)"/><path d="M12.500 4.200l4.500-1.200 2.500 1.800-4 2.200zM20 7.500l4-.8 2.200 2.200-3.600 1.200z" fill="#3a3d42"/><ellipse cx="3.700" cy="13.800" rx="3" ry="3.800" transform="rotate(-28 3.700 13.800)" fill="#05080c"/><ellipse cx="4.300" cy="14.200" rx="1.900" ry="2.900" transform="rotate(-28 4.300 14.200)" fill="url(#ln)"/><ellipse cx="16.900" cy="20.600" rx="3.300" ry="4" transform="rotate(-32 16.900 20.600)" fill="#05080c"/><ellipse cx="17.500" cy="21" rx="2.100" ry="3" transform="rotate(-32 17.500 21)" fill="url(#ln)"/></svg>
<svg style="left:206px;top:360px;overflow:visible" width="28" height="28" viewBox="0 0 28 28"><rect x="1" y="1" width="24" height="24.800" fill="#f7fafc"/><path d="M1.30 5v20.800" stroke="#5f8098" stroke-opacity=".8" stroke-width="1.100"/><path d="M6.05 5v20.800" stroke="#5f8098" stroke-opacity=".8" stroke-width="1.100"/><path d="M10.80 5v20.800" stroke="#5f8098" stroke-opacity=".8" stroke-width="1.100"/><path d="M15.55 5v20.800" stroke="#5f8098" stroke-opacity=".8" stroke-width="1.100"/><path d="M20.30 5v20.800" stroke="#5f8098" stroke-opacity=".8" stroke-width="1.100"/><path d="M25.05 5v20.800" stroke="#5f8098" stroke-opacity=".8" stroke-width="1.100"/><path d="M1 8.60h24" stroke="#5f8098" stroke-opacity=".8" stroke-width="1.100"/><path d="M1 12.05h24" stroke="#5f8098" stroke-opacity=".8" stroke-width="1.100"/><path d="M1 15.50h24" stroke="#5f8098" stroke-opacity=".8" stroke-width="1.100"/><path d="M1 18.95h24" stroke="#5f8098" stroke-opacity=".8" stroke-width="1.100"/><path d="M1 22.40h24" stroke="#5f8098" stroke-opacity=".8" stroke-width="1.100"/><path d="M1 25.85h24" stroke="#5f8098" stroke-opacity=".8" stroke-width="1.100"/><rect x=".8" y="1" width="24.400" height="4.600" fill="url(#tb)"/><g transform="translate(7.800,10.500)"><path d="M.4 13.800C-.2 9.400 2 2.600 5.200.8c1.400-.8 2.800-.2 3.600 1.200.8-1.400 2.200-2 3.600-1.200 3.200 1.800 5.400 8.600 4.800 13-.4 2.400-5.200 2.400-5.600 0l-.6-4.600H6.600L6 13.800c-.4 2.400-5.200 2.400-5.600 0z" fill="#14161c"/><path d="M3 5.500l2.500-2.500 1 3.500-1.500 3zM14.600 5.500l-2.500-2.500-1 3.500 1.500 3z" fill="#4a5a6c"/><ellipse cx="3.300" cy="13.600" rx="2.500" ry="2.300" fill="url(#lp)"/><ellipse cx="14.300" cy="13.600" rx="2.500" ry="2.300" fill="url(#lp)"/></g></svg>
<svg style="left:239px;top:360px;overflow:visible" width="28" height="28" viewBox="0 0 28 28"><path d="M.8 3.200l10.500-1.400 5 2.400v22l-5 -1.200-10.500 -1.600z" fill="#f6f6f6"/><path d="M.8 3.200l2-.3v20.800l-2 -.3z" fill="#c4c4c4"/><path d="M11.300 1.800l5 2.400v22l-5 -1.200z" fill="#e6e6e6"/><text transform="translate(9.500,22) rotate(-90)" font-family="Liberation Sans,sans-serif" font-size="7" fill="#8a8a8a">WWw</text><path d="M13.200 8v14" stroke="#a8a8a8" stroke-width="1.200" stroke-dasharray="1.500 1.500"/><path d="M10.400 2.600c0-2.800 17.600-2.800 17.600 0 0 1.200-6.600 9-6.600 11.400v8l-3.400-.4v-7.600c0-2.400-7.600-10.200-7.600-11.400z" fill="url(#sv)"/><ellipse cx="19.200" cy="2.700" rx="8.800" ry="2.300" fill="#7c8084"/><ellipse cx="19.400" cy="3.100" rx="7" ry="1.500" fill="#c4c6c8"/><path d="M18 14.500h3.400v7.500l-3.400-.4z" fill="#5c646c"/><path d="M23 14.500l5-.5v6l-5 2z" fill="#d4d4d4"/><path d="M11 25.500l14.500-3 2 1-10 3.500z" fill="#fff" fill-opacity=".7"/></svg>
<svg style="left:273px;top:360px;overflow:visible" width="28" height="28" viewBox="0 0 28 28"><rect x="0.500" y="24.600" width="27" height="1.600" rx=".8" fill="#d0d0d0"/><rect x="0" y="3" width="28" height="21" rx="1.500" fill="url(#bd)"/><path d="M8.500 7H3.400l3 5-3.200 5.400h5.600" fill="none" stroke="#fff" stroke-width="1.500"/><path d="M11.500 13.500h14" stroke="#fff" stroke-width="1.200"/><text x="11.500" y="11.600" font-family="Liberation Sans,sans-serif" font-size="6.500" font-weight="bold" fill="#fff">x+s</text><text x="16.800" y="20.600" font-family="Liberation Sans,sans-serif" font-size="6.500" font-weight="bold" fill="#fff">3</text><path d="M4 20.500h2M4.400 5h1" stroke="#fff" stroke-width="1"/></svg>
<svg style="left:316px;top:360px;overflow:visible" width="28" height="28" viewBox="0 0 28 28"><ellipse cx="12" cy="26.300" rx="12" ry="1.400" fill="#000" fill-opacity=".12"/><polygon points="13.27,7.44 13.02,8.67 11.19,9.10 10.65,9.89 10.95,11.75 9.91,12.45 8.30,11.46 7.37,11.64 6.26,13.17 5.03,12.92 4.60,11.09 3.81,10.55 1.95,10.85 1.25,9.81 2.24,8.20 2.06,7.27 0.53,6.16 0.78,4.93 2.61,4.50 3.15,3.71 2.85,1.85 3.89,1.15 5.50,2.14 6.43,1.96 7.54,0.43 8.77,0.68 9.20,2.51 9.99,3.05 11.85,2.75 12.55,3.79 11.56,5.40 11.74,6.33" fill="url(#gr)" stroke="#1c3f68" stroke-width=".7" stroke-linejoin="round"/><ellipse cx="6.9" cy="6.8" rx="2.11" ry="2.56" fill="#f6f8fa" stroke="#7f9bb8" stroke-width=".6"/><polygon points="25.07,8.44 24.82,9.67 22.99,10.10 22.45,10.89 22.75,12.75 21.71,13.45 20.10,12.46 19.17,12.64 18.06,14.17 16.83,13.92 16.40,12.09 15.61,11.55 13.75,11.85 13.05,10.81 14.04,9.20 13.86,8.27 12.33,7.16 12.58,5.93 14.41,5.50 14.95,4.71 14.65,2.85 15.69,2.15 17.30,3.14 18.23,2.96 19.34,1.43 20.57,1.68 21.00,3.51 21.79,4.05 23.65,3.75 24.35,4.79 23.36,6.40 23.54,7.33" fill="url(#gr)" stroke="#1c3f68" stroke-width=".7" stroke-linejoin="round"/><ellipse cx="18.7" cy="7.8" rx="2.11" ry="2.56" fill="#f6f8fa" stroke="#7f9bb8" stroke-width=".6"/><polygon points="15.07,21.04 14.82,22.27 12.99,22.70 12.45,23.49 12.75,25.35 11.71,26.05 10.10,25.06 9.17,25.24 8.06,26.77 6.83,26.52 6.40,24.69 5.61,24.15 3.75,24.45 3.05,23.41 4.04,21.80 3.86,20.87 2.33,19.76 2.58,18.53 4.41,18.10 4.95,17.31 4.65,15.45 5.69,14.75 7.30,15.74 8.23,15.56 9.34,14.03 10.57,14.28 11.00,16.11 11.79,16.65 13.65,16.35 14.35,17.39 13.36,19.00 13.54,19.93" fill="url(#gr)" stroke="#1c3f68" stroke-width=".7" stroke-linejoin="round"/><ellipse cx="8.7" cy="20.4" rx="2.11" ry="2.56" fill="#f6f8fa" stroke="#7f9bb8" stroke-width=".6"/><polygon points="27.97,21.34 27.72,22.57 25.89,23.00 25.35,23.79 25.65,25.65 24.61,26.35 23.00,25.36 22.07,25.54 20.96,27.07 19.73,26.82 19.30,24.99 18.51,24.45 16.65,24.75 15.95,23.71 16.94,22.10 16.76,21.17 15.23,20.06 15.48,18.83 17.31,18.40 17.85,17.61 17.55,15.75 18.59,15.05 20.20,16.04 21.13,15.86 22.24,14.33 23.47,14.58 23.90,16.41 24.69,16.95 26.55,16.65 27.25,17.69 26.26,19.30 26.44,20.23" fill="url(#gr)" stroke="#1c3f68" stroke-width=".7" stroke-linejoin="round"/><ellipse cx="21.6" cy="20.7" rx="2.11" ry="2.56" fill="#f6f8fa" stroke="#7f9bb8" stroke-width=".6"/></svg>
<svg style="left:359px;top:360px;overflow:visible" width="28" height="28" viewBox="0 0 28 28"><path d="M1 .8l22.500 3.400v14.500l-22.500 -1.500z" fill="url(#wn)" stroke="#8fa9bb" stroke-width="1" stroke-linejoin="round"/><path d="M1.500 1.300l21.500 3.300v3l-21.500 -3z" fill="#b9cfdc"/><path d="M14.500 5.700l1.600.3M17.300 6.100l1.600.3M20 6.500l1.600.3" stroke="#2a7fd0" stroke-width="1.400"/><ellipse cx="19" cy="27" rx="8" ry="1.200" fill="#000" fill-opacity=".15"/><circle cx="18.500" cy="19.700" r="7.900" fill="#b4b4b4"/><path d="M18.800 19.600L12.600 16a7.200 7.200 0 0 1 13.400 3.600z" fill="#2fb4f4"/><path d="M18.800 19.600H26a7.200 7.200 0 0 1-7.200 7.200z" fill="#f01818"/><path d="M18.800 19.600v7.200a7.200 7.200 0 0 1-7.200-7.200z" fill="#067a10"/><path d="M18.800 19.600h-7.200a7.200 7.200 0 0 1 1-3.600z" fill="#7cc87c"/><path d="M12.600 16a7.200 7.200 0 0 1 13 1.500c-3-2.600-9-3.400-13-1.500z" fill="#fff" fill-opacity=".25"/></svg>
<svg style="left:953px;top:360px;overflow:visible" width="28" height="28" viewBox="0 0 28 28"><path d="M23.500 26.500l4-3.600h-4z" fill="#000" fill-opacity=".2"/><path d="M1.600 1.500l20.500 3.300v21.600l-20.500 -3.700z" fill="#d9d9d9" stroke="#2e2e2e" stroke-width="1.500" stroke-linejoin="round"/><path d="M3.800 4.200l5.300 .9v17.800l-5.300 -1z" fill="#d01818"/><path d="M9.900 14l5.300 .9v9.100l-5.300 -1z" fill="#2a66c4"/><path d="M16 11.400l5.100 .9v13l-5.100 -1z" fill="#1c961f"/></svg>
<svg style="left:1000.5px;top:360px;overflow:visible" width="28" height="28" viewBox="0 0 28 28"><path d="M7.400 1.600l12.200-1.400v26.600l-18.300 -3.700v-15.800z" fill="#eaf5fe" stroke="#66bcfa" stroke-width="1.200" stroke-linejoin="round"/><path d="M6.500 5.200l10.500-1.200v2.700l-10.500 1z" fill="#3a96ee"/><path d="M4 9.500l13.500-.8v14.800l-13.500 -2.500z" fill="#a8d2f6"/><path d="M5 8.400l2.500-.2v2.400l-2.500 .1zM8.600 11.200l4.400-.1v4.800l-4.400 -.2z" fill="#f8ec30"/><path d="M8.600 17l4.600.2v2.300l-4.600 -.4zM13.600 13.400l2.800 .1v3l-2.800 -.2z" fill="#f04820"/><path d="M4.600 19.300l3.300.5v2.300l-3.300 -.6z" fill="#f8ec30"/><path d="M8.600 21.200l8 1.200M4.600 12.500l3.400-.1M4.600 15.200l3.400 0M4.600 17.800l3.400.2M13.600 11.400l3 0M13.600 18.500l3 .3M13.600 20.500l3 .3" stroke="#fff" stroke-width="1.400" stroke-opacity=".9"/></svg>
<svg style="left:1044px;top:360px;overflow:visible" width="28" height="28" viewBox="0 0 28 28"><path d="M.8 1.300c0-.6.5-1 1.100-.9l17.800 1.700 2.400 3v22l-20.400 -4.200c-.5-.1-.9-.6-.9-1.100z" fill="#0a0a0a" stroke="#1a1a1a" stroke-width=".6" stroke-linejoin="round"/><path d="M1.600 2v20l2 .5V2.300z" fill="#4a4a4a"/><path d="M5.300 1.200l11.100 1.100v5.700l-11.100 -1.300z" fill="#b9b9b9"/><path d="M12.400 2.200v5.200l2.200.3V2.400z" fill="#4c4c4c"/><path d="M3.800 9.300l14.400 1.900v13.400l-14.400 -2.900z" fill="#e6e6e6"/><path d="M3.800 9.300l14.400 1.900v1.600l-14.400 -1.900z" fill="#f8f8f8"/></svg>
<svg style="left:1086px;top:360px;overflow:visible" width="28" height="28" viewBox="0 0 28 28"><path d="M3 26l17 1.500 6-3" fill="none" stroke="#000" stroke-opacity=".07" stroke-width="2"/><path d="M7.500 2.400l18 3.400v15l-18 -2.600z" fill="url(#wn)" stroke="#86a8b8" stroke-width="1" stroke-linejoin="round"/><path d="M8 3l17 3.200v2.400l-17 -3z" fill="#a9c6d6"/><path d="M19 6.400l4.500.8" stroke="#3a8ad0" stroke-width="1.200"/><path d="M.8 7.400l17.700 3.200v15l-17.700 -3.200z" fill="url(#wn)" stroke="#86a8b8" stroke-width="1" stroke-linejoin="round"/><path d="M1.300 8l16.700 3v2.400l-16.700 -3z" fill="#a9c6d6"/><path d="M12 11.400l4.500.8" stroke="#3a8ad0" stroke-width="1.200"/></svg>
<svg style="left:1128px;top:360px;overflow:visible" width="28" height="28" viewBox="0 0 28 28"><circle cx="14" cy="14" r="13.4" fill="#fff" fill-opacity=".5"/><circle cx="14" cy="14" r="12.8" fill="url(#ring)"/><circle cx="14" cy="14" r="12.3" fill="none" stroke="#8f8f8f" stroke-opacity=".55" stroke-width=".9"/><circle cx="14" cy="14" r="10.800" fill="url(#gG)"/><path d="M3.300 15.200C7 11.200 17 9.600 24.300 11A10.800 10.800 0 0 0 3.300 15.200z" fill="url(#gl)"/><path d="M8.550 8.300L12.600 13.900L10.400 13.900C10.200 16.500 11.400 18.200 13.700 18.900L12.700 22C8.600 21 6.500 17.800 6.700 13.900L4.500 13.900Z" fill="url(#wh)"/><path d="M8.550 8.300L12.600 13.900L10.400 13.900C10.200 16.500 11.400 18.200 13.700 18.900L12.700 22C8.600 21 6.500 17.800 6.700 13.900L4.500 13.900Z" fill="url(#wh)" transform="rotate(180 14 14)"/></svg>
<svg style="left:1171px;top:360px;overflow:visible" width="28" height="28" viewBox="0 0 28 28"><circle cx="14" cy="14" r="13.4" fill="#fff" fill-opacity=".5"/><circle cx="14" cy="14" r="12.8" fill="url(#ring)"/><circle cx="14" cy="14" r="12.3" fill="none" stroke="#8f8f8f" stroke-opacity=".55" stroke-width=".9"/><circle cx="14" cy="14" r="10.800" fill="url(#gB)"/><path d="M3.300 15.200C7 11.200 17 9.600 24.300 11A10.800 10.800 0 0 0 3.300 15.200z" fill="url(#gl)"/><path d="M9.900 9.300h3.200v9.400h-3.200zM19.300 9.300v9.400l-6.200-4.700z" fill="url(#wh)"/></svg>
<svg style="left:1205px;top:360px;overflow:visible" width="28" height="28" viewBox="0 0 28 28"><circle cx="14" cy="14" r="13.4" fill="#fff" fill-opacity=".5"/><circle cx="14" cy="14" r="12.8" fill="url(#ring)"/><circle cx="14" cy="14" r="12.3" fill="none" stroke="#8f8f8f" stroke-opacity=".55" stroke-width=".9"/><circle cx="14" cy="14" r="10.800" fill="url(#gB)"/><path d="M3.300 15.200C7 11.200 17 9.600 24.300 11A10.800 10.800 0 0 0 3.300 15.200z" fill="url(#gl)"/><path d="M19.200 9.300h-3.200v9.400h3.200zM9.800 9.300v9.400l6.200-4.700z" fill="url(#wh)"/></svg>
</div>
</body></html>
